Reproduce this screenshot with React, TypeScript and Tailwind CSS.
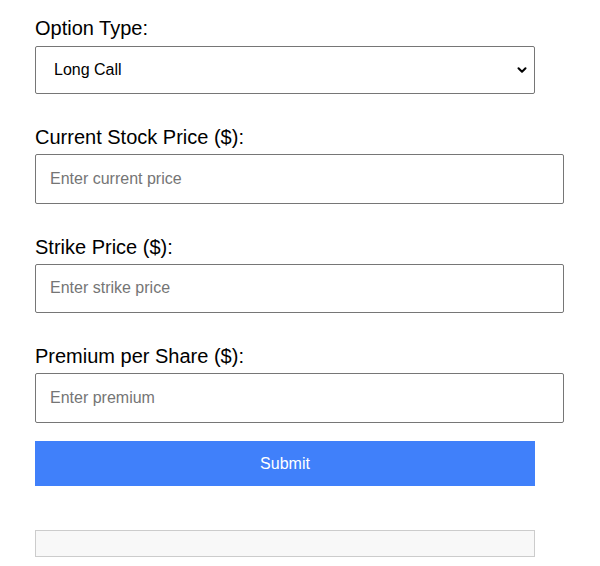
import { ChevronDown } from 'lucide-react'

const fields = [
  { label: 'Current Stock Price ($):', placeholder: 'Enter current price' },
  { label: 'Strike Price ($):', placeholder: 'Enter strike price' },
  { label: 'Premium per Share ($):', placeholder: 'Enter premium' },
]

export default function App() {
  return (
    <div className="min-h-[566px] bg-white pl-[35px] pt-[15px] font-['Liberation_Sans',Arial,sans-serif] text-black">
      <div className="w-[500px]">
        <label className="block text-[20px] leading-[26px] mb-[5px]">Option Type:</label>
        <div className="relative w-[500px]">
          <select className="block w-full h-[48px] appearance-none rounded-[2px] border border-[#767676] bg-white pl-[18px] pr-[36px] text-[16px] text-black outline-none">
            <option>Long Call</option>
            <option>Long Put</option>
            <option>Short Call</option>
            <option>Short Put</option>
          </select>
          <ChevronDown
            className="pointer-events-none absolute right-[6px] top-[17px] h-[14px] w-[14px] text-black"
            strokeWidth={3.5}
          />
        </div>

        {fields.map((f) => (
          <div key={f.label} className="mt-[30px]">
            <label className="block text-[20px] leading-[26px] mb-[4px]">{f.label}</label>
            <input
              type="number"
              placeholder={f.placeholder}
              className="block w-[529px] h-[49.5px] rounded-[2px] border border-[#767676] bg-white px-[14px] text-[16px] text-black placeholder:text-[#757575] outline-none"
            />
          </div>
        ))}

        <button
          type="button"
          className="mt-[18.5px] block w-[500px] h-[45px] bg-[#4080fa] text-[16px] text-white"
        >
          Submit
        </button>

        <div className="mt-[44px] h-[27px] w-[500px] border border-[#cccccc] bg-[#f8f8f8]" />
      </div>
    </div>
  )
}
